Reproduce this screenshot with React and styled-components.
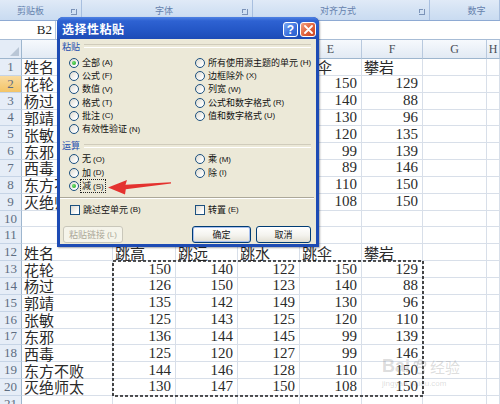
import React from 'react';
import styled, { createGlobalStyle, css } from 'styled-components';

const GlobalStyle = createGlobalStyle`
  html, body {
    margin: 0;
    padding: 0;
    background: #fff;
    overflow: hidden;
  }
  * { box-sizing: border-box; }
`;

const CJK = `"Noto Sans CJK SC", "Liberation Sans", sans-serif`;
const SERIF = `"Liberation Serif", "Noto Sans CJK SC", serif`;

const titles = ['姓名', '跳高', '跳远', '跳水', '跳伞', '攀岩'];
const names = ['花轮', '杨过', '郭靖', '张敏', '东邪', '西毒', '东方不败', '灭绝师太'];
// upper block: columns B-D sit under the dialog, only E and F show
const topData = [
    [150, 129],
    [140, 88],
    [130, 96],
    [120, 135],
    [99, 139],
    [89, 146],
    [110, 150],
    [108, 150],
];
const bottomData = [
    [150, 140, 122, 150, 129],
    [126, 150, 123, 140, 88],
    [135, 142, 149, 130, 96],
    [125, 143, 125, 120, 110],
    [136, 144, 145, 99, 139],
    [125, 120, 127, 99, 146],
    [144, 146, 128, 110, 150],
    [130, 147, 150, 108, 150],
];

const rows = [
    [titles[0], '', '', '', titles[4], titles[5]],
    ...topData.map((r, i) => [names[i], '', '', '', ...r]),
    [],
    [],
    titles,
    ...bottomData.map((r, i) => [names[i], ...r]),
    [],
];

const columns = ['A', 'B', 'C', 'D', 'E', 'F', 'G', 'H'];

const pasteOptions = [
    { text: '全部', key: 'A', on: true },
    { text: '所有使用源主题的单元', key: 'H' },
    { text: '公式', key: 'F' },
    { text: '边框除外', key: 'X' },
    { text: '数值', key: 'V' },
    { text: '列宽', key: 'W' },
    { text: '格式', key: 'T' },
    { text: '公式和数字格式', key: 'R' },
    { text: '批注', key: 'C' },
    { text: '值和数字格式', key: 'U' },
    { text: '有效性验证', key: 'N' },
];

const opOptions = [
    { text: '无', key: 'O' },
    { text: '乘', key: 'M' },
    { text: '加', key: 'D' },
    { text: '除', key: 'I' },
    { text: '减', key: 'S', on: true, focus: true },
];

function Choice({ text, hotkey, on, focus, box }) {
    return (
        <Option>
            {box ? <CheckBox /> : <RadioDot $on={on} />}
            <Caption $focus={focus}>
                <span>{text}</span>
                <Key>({hotkey})</Key>
            </Caption>
        </Option>
    );
}

export default function App() {
    return (
        <Screen>
            <GlobalStyle />
            <Ribbon>
                <RibbonGroup $left={0} $right={20}>剪贴板<Launcher /></RibbonGroup>
                <RibbonGroup $left={0} $right={6}>字体<Launcher /></RibbonGroup>
                <RibbonGroup $left={0} $right={6}>对齐方式<Launcher /></RibbonGroup>
                <RibbonGroup $left={24} $right={0}>数字</RibbonGroup>
            </Ribbon>
            <FormulaBar>
                <NameBox>B2</NameBox>
            </FormulaBar>
            <Sheet>
                <Corner />
                {columns.map(c => (
                    <ColHead key={c} $active={c === 'B'}>{c}</ColHead>
                ))}
                {rows.map((r, i) => (
                    <React.Fragment key={i}>
                        <RowHead $active={i === 1}>{i + 1}</RowHead>
                        {columns.map((c, j) => {
                            const v = r[j];
                            return (
                                <Cell key={c} $num={typeof v === 'number'}>
                                    {v}
                                </Cell>
                            );
                        })}
                    </React.Fragment>
                ))}
            </Sheet>

            <Marquee width="312" height="137" viewBox="0 0 312 137">
                <rect x="1" y="1" width="310" height="135" fill="none" stroke="#1a1a1a" strokeWidth="1.6" strokeDasharray="3 2" />
            </Marquee>

            <Watermark>
                <MarkLogo>
                    Bai
                    <svg width="16" height="16" viewBox="0 0 16 16">
                        <g fill="none" stroke="currentColor" strokeWidth="1.5">
                            <ellipse cx="4" cy="5" rx="1.6" ry="2.2" />
                            <ellipse cx="8" cy="3" rx="1.6" ry="2.2" />
                            <ellipse cx="12" cy="5" rx="1.6" ry="2.2" />
                            <path d="M4 13c0-3 2-5 4-5s4 2 4 5c0 2-8 2-8 0z" />
                        </g>
                    </svg>
                    <MarkCjk>经验</MarkCjk>
                </MarkLogo>
                <MarkUrl>jingyan.baidu.com</MarkUrl>
            </Watermark>

            <Dialog>
                <TitleBar>
                    <Title>选择性粘贴</Title>
                    <Caps>
                        <CapButton $kind="help">?</CapButton>
                        <CapButton $kind="close">
                            <svg width="9" height="9" viewBox="0 0 9 9">
                                <path d="M1 1l7 7M8 1L1 8" stroke="#fff" strokeWidth="1.8" strokeLinecap="round" />
                            </svg>
                        </CapButton>
                    </Caps>
                </TitleBar>
                <Body>
                    <SectionLabel>粘贴</SectionLabel>
                    <OptionGrid $rows={6}>
                        {pasteOptions.map(o => (
                            <Choice key={o.key} text={o.text} hotkey={o.key} on={o.on} />
                        ))}
                    </OptionGrid>
                    <SectionLabel $gap>运算</SectionLabel>
                    <OptionGrid $rows={3} $tight>
                        {opOptions.map(o => (
                            <Choice key={o.key} text={o.text} hotkey={o.key} on={o.on} focus={o.focus} />
                        ))}
                    </OptionGrid>
                    <Etched />
                    <CheckRow>
                        <Choice box text="跳过空单元" hotkey="B" />
                        <Choice box text="转置" hotkey="E" />
                    </CheckRow>
                    <ButtonRow>
                        <Button $w={60} $disabled>
                            <span>粘贴链接</span>
                            <Key>(L)</Key>
                        </Button>
                        <RightButtons>
                            <Button $w={59} $default>确定</Button>
                            <Button $w={55}>取消</Button>
                        </RightButtons>
                    </ButtonRow>
                </Body>
            </Dialog>

            <Arrow width="72" height="24" viewBox="0 0 72 24">
                <polygon
                    points="4,11.5 23,4 21.5,8.8 67,6.2 67,7.6 21.8,13.2 21,18.5"
                    fill="#e4322f"
                />
            </Arrow>
        </Screen>
    );
}

const Screen = styled.div`
    position: relative;
    width: 500px;
    height: 404px;
    overflow: hidden;
    background: #fff;
`;

/* ribbon & formula bar */
const Ribbon = styled.div`
    height: 21px;
    display: grid;
    grid-template-columns: 82px 171px 177px 1fr;
    background: linear-gradient(#e0eaf7 0%, #d5e3f4 45%, #c9dbf1 100%);
    border-bottom: 1px solid #8eaad3;
`;
const RibbonGroup = styled.div`
    position: relative;
    display: flex;
    align-items: flex-end;
    justify-content: center;
    padding: 0 ${p => p.$right}px 3px ${p => p.$left}px;
    border-right: 1px solid #a8bfdf;
    font: 9px ${CJK};
    color: #6581ad;
`;
const Launcher = styled.span`
    position: absolute;
    right: 4px;
    bottom: 5px;
    width: 6px;
    height: 6px;
    border-right: 1px solid #7b93b8;
    border-bottom: 1px solid #7b93b8;
    &::after {
        content: '';
        position: absolute;
        left: 0;
        top: 0;
        width: 3px;
        height: 3px;
        border-left: 1px solid #7b93b8;
        border-top: 1px solid #7b93b8;
    }
`;
const FormulaBar = styled.div`
    height: 19px;
    display: flex;
    background: #fff;
    border-bottom: 1px solid #a7bcd6;
`;
const NameBox = styled.div`
    width: 56px;
    display: flex;
    align-items: center;
    justify-content: flex-end;
    padding-right: 3px;
    font: 13px ${SERIF};
    color: #222;
    border-right: 1px solid #b7c7dc;
`;

/* worksheet */
const Sheet = styled.div`
    display: grid;
    grid-template-columns: 22px 91px 63px 62px 62px 62px 61px 64px 1fr;
    grid-template-rows: 19px repeat(21, 16.85px);
`;
const Corner = styled.div`
    position: relative;
    background: #e4ecf7;
    border-right: 1px solid #9eb6ce;
    border-bottom: 1px solid #9eb6ce;
    &::after {
        content: '';
        position: absolute;
        right: 2px;
        bottom: 2px;
        border-left: 9px solid transparent;
        border-bottom: 9px solid #b9c6d6;
    }
`;
const ColHead = styled.div`
    display: flex;
    align-items: center;
    justify-content: center;
    padding-top: 1px;
    background: ${p => p.$active
        ? 'linear-gradient(#f9dfa6, #f2c56b)'
        : 'linear-gradient(#f6f9fd, #e2eaf4)'};
    border-right: 1px solid #b8c9de;
    border-bottom: 1px solid #9eb6ce;
    font: 12px ${SERIF};
    color: #4a4f58;
`;
const RowHead = styled.div`
    display: flex;
    align-items: center;
    justify-content: center;
    background: ${p => p.$active
        ? 'linear-gradient(#f9dba0, #f3c467)'
        : '#e6edf7'};
    border-right: 1px solid #9eb6ce;
    border-bottom: 1px solid #c6d4e6;
    font: 13px ${SERIF};
    color: #5e6d82;
    overflow: hidden;
`;
const Cell = styled.div`
    display: flex;
    align-items: center;
    justify-content: ${p => p.$num ? 'flex-end' : 'flex-start'};
    padding: 0 4px 0 2px;
    border-right: 1px solid #d8dfe9;
    border-bottom: 1px solid #d8dfe9;
    font: 15px ${SERIF};
    color: #2a2a2a;
    white-space: nowrap;
`;

/* overlays */
const Marquee = styled.svg`
    position: absolute;
    left: 112px;
    top: 260px;
`;
const Arrow = styled.svg`
    position: absolute;
    left: 104px;
    top: 176px;
`;
const Watermark = styled.div`
    position: absolute;
    left: 382px;
    top: 356px;
    display: flex;
    flex-direction: column;
    align-items: flex-start;
    color: rgba(140, 140, 140, 0.3);
`;
const MarkLogo = styled.div`
    display: flex;
    align-items: center;
    gap: 2px;
    font: bold 18px "Liberation Sans", sans-serif;
`;
const MarkCjk = styled.span`
    font: 15px ${CJK};
`;
const MarkUrl = styled.div`
    margin-top: 2px;
    font: 8px "Liberation Sans", sans-serif;
`;

/* dialog window */
const Dialog = styled.div`
    position: absolute;
    left: 57px;
    top: 17px;
    width: 262px;
    height: 230px;
    display: flex;
    flex-direction: column;
    background: #1d4bb4;
    border-radius: 6px 6px 0 0;
    box-shadow: 1px 1px 2px rgba(0, 0, 0, 0.35);
`;
const TitleBar = styled.div`
    height: 22px;
    flex: none;
    display: flex;
    align-items: center;
    justify-content: space-between;
    padding: 0 3px 0 5px;
    border-radius: 6px 6px 0 0;
    background: linear-gradient(#4f82e3 0%, #2e62d2 18%, #2457c6 60%, #1d4bb6 100%);
`;
const Title = styled.div`
    font: bold 12px ${CJK};
    color: #fff;
    letter-spacing: 0.5px;
`;
const Caps = styled.div`
    display: flex;
    gap: 2px;
    margin-top: 3px;
`;
const CapButton = styled.div`
    width: 15px;
    height: 15px;
    display: flex;
    align-items: center;
    justify-content: center;
    border: 1px solid #fff;
    border-radius: 3px;
    font: bold 12px "Liberation Sans", sans-serif;
    color: #fff;
    ${p => p.$kind === 'help' && css`
        background: linear-gradient(135deg, #7aa8f5, #3a6fdc 60%, #2d5fcd);
    `}
    ${p => p.$kind === 'close' && css`
        width: 16px;
        background: linear-gradient(135deg, #f2a283, #e0603a 55%, #c94524);
    `}
`;
const Body = styled.div`
    flex: 1;
    display: flex;
    flex-direction: column;
    margin: 0 3px 3px;
    padding: 1px 5px 0 2px;
    background: #ece9d8;
`;
const SectionLabel = styled.div`
    height: 12px;
    margin-top: ${p => p.$gap ? 4 : 0}px;
    display: flex;
    align-items: center;
    gap: 4px;
    font: 9px ${CJK};
    color: #1f4fae;
    &::after {
        content: '';
        flex: 1;
        height: 2px;
        border-top: 1px solid #d0ccbc;
        border-bottom: 1px solid #fff;
    }
`;
const OptionGrid = styled.div`
    margin: ${p => p.$tight ? 1 : 4}px 0 0 7px;
    display: grid;
    grid-template-columns: 126px 1fr;
    grid-template-rows: repeat(${p => p.$rows}, ${p => p.$tight ? 13.4 : 13.3}px);
`;
const Option = styled.div`
    display: flex;
    align-items: center;
    gap: 3px;
`;
const RadioDot = styled.span`
    flex: none;
    width: 10px;
    height: 10px;
    border-radius: 50%;
    border: 1px solid #1c5180;
    background: linear-gradient(135deg, #dcd9cf, #ffffff 80%);
    display: flex;
    align-items: center;
    justify-content: center;
    ${p => p.$on && css`
        &::after {
            content: '';
            width: 4px;
            height: 4px;
            border-radius: 50%;
            background: radial-gradient(circle at 35% 35%, #6ee06e, #21a121);
        }
    `}
`;
const CheckBox = styled.span`
    flex: none;
    width: 10px;
    height: 10px;
    border: 1px solid #1c5180;
    background: linear-gradient(135deg, #dcd9cf, #ffffff 80%);
`;
const Caption = styled.span`
    display: flex;
    align-items: center;
    font: 9px ${CJK};
    color: #111;
    white-space: nowrap;
    line-height: 10px;
    ${p => p.$focus && css`
        outline: 1px dotted #222;
        outline-offset: 1px;
    `}
`;
const Key = styled.span`
    margin-left: 2px;
    font: 8px "Liberation Sans", sans-serif;
`;
const Etched = styled.div`
    height: 2px;
    margin: 4px -3px 0 -2px;
    border-top: 1px solid #aca899;
    border-bottom: 1px solid #fff;
`;
const CheckRow = styled.div`
    height: 14px;
    margin: 4px 0 0 8px;
    display: grid;
    grid-template-columns: 125px 1fr;
`;
const ButtonRow = styled.div`
    margin-top: 9px;
    margin-left: 1px;
    display: flex;
    align-items: center;
`;
const RightButtons = styled.div`
    margin-left: auto;
    display: flex;
    gap: 5px;
`;
const Button = styled.div`
    width: ${p => p.$w}px;
    height: 17px;
    display: flex;
    align-items: center;
    justify-content: center;
    border: 1px solid ${p => p.$disabled ? '#c9c7ba' : '#003c74'};
    border-radius: 3px;
    background: ${p => p.$disabled
        ? '#f5f4ea'
        : 'linear-gradient(#ffffff, #f4f3ee 55%, #e2dfd3)'};
    box-shadow: ${p => p.$default ? 'inset 0 0 0 1px #a9c0ee' : 'none'};
    font: 9px ${CJK};
    color: ${p => p.$disabled ? '#aca899' : '#111'};
    white-space: nowrap;
`;
